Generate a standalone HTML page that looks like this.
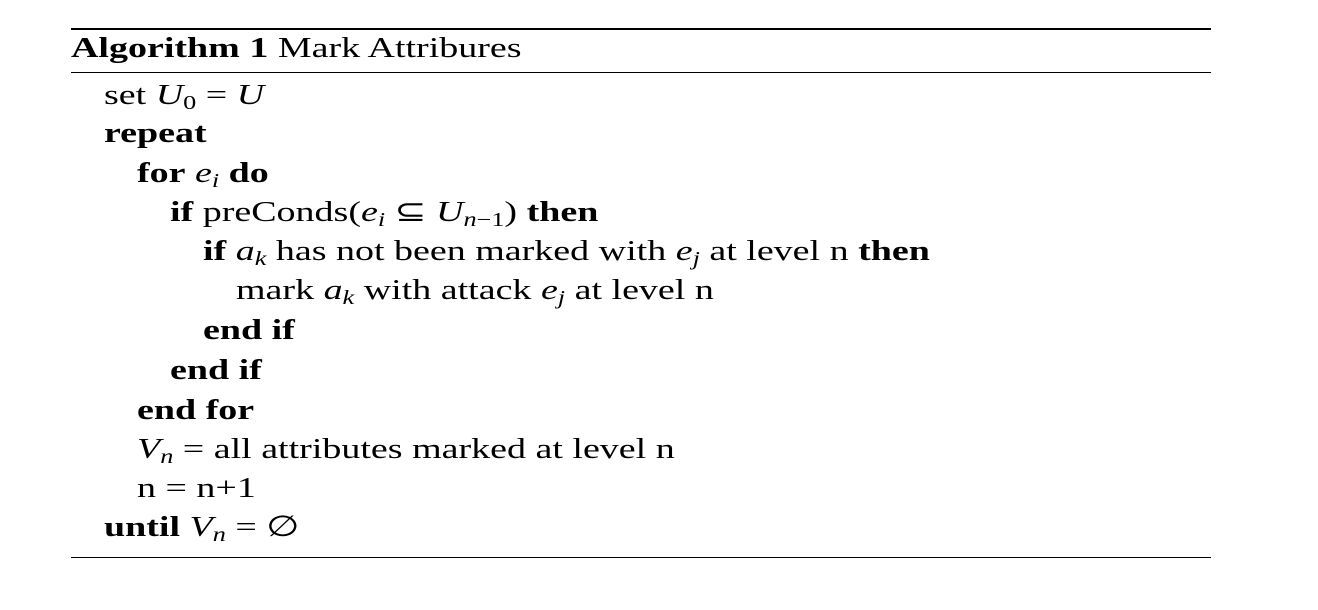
<!DOCTYPE html>
<html><head><meta charset="utf-8"><style>
body{margin:0;width:1318px;height:610px;background:#fff;position:relative;overflow:hidden;font-family:"Liberation Serif",serif;font-size:29px;color:#000}
.l{position:absolute;line-height:29px;white-space:nowrap;transform:scaleX(1.31);transform-origin:0 0}
.r{position:absolute;left:71px;width:1140px;background:#000}
b{font-weight:bold}
i{font-style:italic}
sub{font-size:20px;vertical-align:-5px;line-height:0}
</style></head><body>
<div class="r" style="top:28px;height:2px"></div>
<div class="r" style="top:72px;height:1px"></div>
<div class="r" style="top:557px;height:1px"></div>
<div class="l" style="left:71px;top:34px"><b>Algorithm 1</b> Mark Attribures</div>
<div class="l" style="left:104px;top:81px">set <i>U</i><sub>0</sub> = <i>U</i></div>
<div class="l" style="left:104px;top:119px"><b>repeat</b></div>
<div class="l" style="left:137px;top:159px"><b>for</b> <i>e<sub>i</sub></i> <b>do</b></div>
<div class="l" style="left:170px;top:198px"><b>if</b> preConds(<i>e<sub>i</sub></i> ⊆ <i>U</i><sub><i>n</i>−1</sub>) <b>then</b></div>
<div class="l" style="left:203px;top:237px"><b>if</b> <i>a<sub>k</sub></i> has not been marked with <i>e<sub>j</sub></i> at level n <b>then</b></div>
<div class="l" style="left:236px;top:276px">mark <i>a<sub>k</sub></i> with attack <i>e<sub>j</sub></i> at level n</div>
<div class="l" style="left:203px;top:316px"><b>end if</b></div>
<div class="l" style="left:170px;top:356px"><b>end if</b></div>
<div class="l" style="left:137px;top:396px"><b>end for</b></div>
<div class="l" style="left:137px;top:435px"><i>V<sub>n</sub></i> = all attributes marked at level n</div>
<div class="l" style="left:137px;top:474px">n = n+1</div>
<div class="l" style="left:104px;top:513px"><b>until</b> <i>V<sub>n</sub></i> = ∅</div>
</body></html>
